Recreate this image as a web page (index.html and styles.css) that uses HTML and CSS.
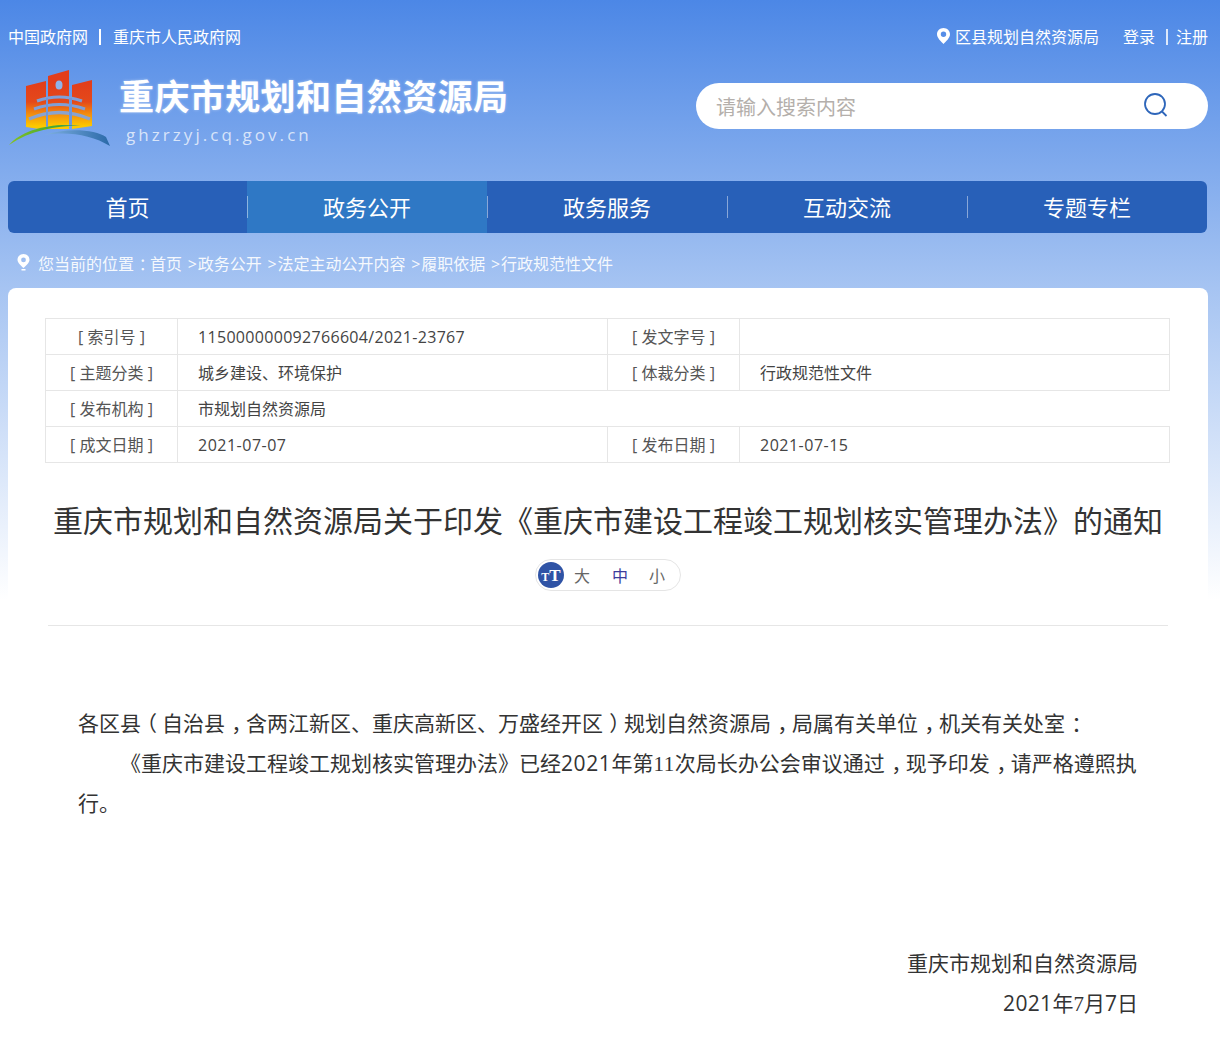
FILE: index.html
```html
<!DOCTYPE html>
<html lang="zh-CN">
<head>
<meta charset="utf-8">
<title>重庆市规划和自然资源局关于印发《重庆市建设工程竣工规划核实管理办法》的通知</title>
<link rel="stylesheet" href="styles.css">
</head>
<body>
<div class="page">
  <div class="topbar">
    <div class="toplinks">
      <a>中国政府网</a><i class="bar bar-left"></i><a>重庆市人民政府网</a>
    </div>
    <div class="toplinks">
      <svg class="pin" viewBox="0 0 13 16" width="13" height="16"><path fill="#fff" fill-rule="evenodd" d="M6.5 0C2.9 0 0 2.8 0 6.3 0 10 4.200 13.700 6.500 16 8.800 13.700 13 10 13 6.300 13 2.800 10.100 0 6.500 0ZM6.500 3.600A2.700 2.700 0 1 1 6.500 9 2.700 2.700 0 0 1 6.500 3.600Z"/></svg>
      <a class="district">区县规划自然资源局</a>
      <a class="login">登录</a><i class="bar bar-right"></i><a>注册</a>
    </div>
  </div>

  <div class="masthead">
    <div class="brand">
      <svg class="logo" viewBox="8 64 104 82" width="104" height="82">
        <defs>
          <linearGradient id="warm" gradientUnits="userSpaceOnUse" x1="0" y1="80" x2="0" y2="124">
            <stop offset="0" stop-color="#e23d1b"/>
            <stop offset=".45" stop-color="#e4491a"/>
            <stop offset=".75" stop-color="#f3920e"/>
            <stop offset="1" stop-color="#fdc800"/>
          </linearGradient>
          <linearGradient id="arcg" gradientUnits="userSpaceOnUse" x1="9" y1="0" x2="80" y2="0">
            <stop offset="0" stop-color="#86c21f"/>
            <stop offset=".7" stop-color="#3fa53a"/>
            <stop offset="1" stop-color="#4b9a8a"/>
          </linearGradient>
          <linearGradient id="arcb" gradientUnits="userSpaceOnUse" x1="45" y1="0" x2="110" y2="0">
            <stop offset="0" stop-color="#7fb0e0"/>
            <stop offset="1" stop-color="#2a69a8"/>
          </linearGradient>
        </defs>
        <path fill="url(#warm)" d="M26 84 46 79V128L26 125Z"/>
        <path fill="url(#warm)" d="M48 74 69 68V127H48Z"/>
        <path fill="url(#warm)" d="M72 83 92 78V124L72 127Z"/>
        <ellipse cx="59" cy="83" rx="3.500" ry="4.500" fill="#8fb3ea"/>
        <path fill="none" stroke="#7f9fd8" stroke-width="3" d="M37 99Q59 91 82 99"/>
        <path fill="none" stroke="#7f9fd8" stroke-width="3" d="M34 107Q59 98 85 107"/>
        <path fill="none" stroke="#8aa3cf" stroke-width="3.500" d="M29 117Q59 104 90 117"/>
        <path fill="#6d97de" d="M46 96h2v28h-2zM69 96h3v28h-3z"/>
        <path fill="url(#arcg)" d="M9 143C22 128 50 120 84 124 62 123 32 127 9 143Z"/>
        <path fill="url(#arcb)" d="M44 133C68 125 96 128 106 135L110 144C92 133 68 129 44 133Z"/>
      </svg>
      <div class="brand-text">
        <div class="brand-name">重庆市规划和自然资源局</div>
        <div class="brand-url">ghzrzyj.cq.gov.cn</div>
      </div>
    </div>
    <div class="search">
      <input class="search-input" type="text" placeholder="请输入搜索内容">
      <svg class="search-icon" viewBox="0 0 26 26" width="26" height="26"><circle cx="12" cy="12" r="10" fill="none" stroke="#2e66ba" stroke-width="1.800"/><path d="M19 19.500 23.500 24" fill="none" stroke="#2e66ba" stroke-width="1.800"/></svg>
    </div>
  </div>

  <nav class="nav">
    <a class="nav-item">首页</a>
    <a class="nav-item active">政务公开</a>
    <a class="nav-item">政务服务</a>
    <a class="nav-item">互动交流</a>
    <a class="nav-item">专题专栏</a>
  </nav>

  <div class="crumbs">
    <svg class="crumb-pin" viewBox="0 0 13 17" width="13" height="17"><path fill="#fff" fill-rule="evenodd" d="M6.500 0C3 0 .5 2.600.5 5.800.5 8.800 4.300 12 6.500 14 8.700 12 12.500 8.800 12.500 5.800 12.500 2.600 10 0 6.500 0ZM6.500 3.500A2.400 2.400 0 1 1 6.500 8.300 2.400 2.400 0 0 1 6.500 3.500ZM4.500 15h4v1.500h-4Z"/></svg>
    <span>您当前的位置<span class="pr">：</span>首页<span class="sep">&gt;</span>政务公开<span class="sep">&gt;</span>法定主动公开内容<span class="sep">&gt;</span>履职依据<span class="sep">&gt;</span>行政规范性文件</span>
  </div>

  <main class="card">
    <table class="meta">
      <colgroup><col class="c-label"><col class="c-value"><col class="c-label"><col></colgroup>
      <tr><th>[ 索引号 ]</th><td class="num">115000000092766604/2021-23767</td><th>[ 发文字号 ]</th><td></td></tr>
      <tr><th>[ 主题分类 ]</th><td>城乡建设、环境保护</td><th>[ 体裁分类 ]</th><td>行政规范性文件</td></tr>
      <tr><th>[ 发布机构 ]</th><td class="open-right">市规划自然资源局</td><td class="blank" colspan="2"></td></tr>
      <tr><th>[ 成文日期 ]</th><td class="date">2021-07-07</td><th>[ 发布日期 ]</th><td class="date">2021-07-15</td></tr>
    </table>

    <h1 class="title">重庆市规划和自然资源局关于印发《重庆市建设工程竣工规划核实管理办法》的通知</h1>

    <div class="size-row">
      <div class="sizes">
        <span class="size-icon"><span class="t-small">T</span><span class="t-big">T</span></span>
        <a class="s-big">大</a><a class="s-mid">中</a><a class="s-small">小</a>
      </div>
    </div>

    <hr class="rule">

    <article class="body">
      <p>各区县<span class="pl">（</span>自治县<span class="pr">，</span>含两江新区、重庆高新区、万盛经开区<span class="pr">）</span>规划自然资源局<span class="pr">，</span>局属有关单位<span class="pr">，</span>机关有关处室<span class="pr">：</span></p>
      <p class="indent">《重庆市建设工程竣工规划核实管理办法》已经<span class="wide">2021</span>年第<span class="thin wide">11</span>次局长办公会审议通过<span class="pr">，</span>现予印发<span class="pr">，</span>请严格遵照执<br>行。</p>
      <p class="sign first">重庆市规划和自然资源局</p>
      <p class="sign"><span class="wide">2021</span>年<span class="thin">7</span>月7日</p>
    </article>
  </main>
</div>
</body>
</html>
```
FILE: styles.css
```css
* { box-sizing: border-box; }
html, body { margin: 0; padding: 0; }
body {
  font-family: "Open Sans", "Noto Sans CJK SC", sans-serif;
  color: #333;
  background: #fff linear-gradient(#4c87e6 0, #a6c4f2 288px, #fff 600px) no-repeat;
  background-size: 100% 600px;
}
.page { width: 1200px; margin-left: 8px; }
a { color: inherit; text-decoration: none; }

/* full-width punctuation is drawn centred in its cell */
.pr, .pl { display: inline-block; width: 1em; line-height: 1; text-indent: 0; }
.pr { transform: translateX(.3em); }
.pl { transform: translateX(-.24em); }

.topbar {
  display: flex;
  justify-content: space-between;
  align-items: center;
  height: 49px;
  padding-top: 25px;
  color: #fff;
  font-size: 16px;
}
.toplinks { display: flex; align-items: center; line-height: 24px; }
.bar { display: block; width: 2px; height: 16px; background: #fff; }
.bar-left { margin: 0 12px 0 11px; }
.bar-right { margin: 0 8px 0 11px; opacity: .8; }
.pin { margin-right: 5px; margin-top: -3px; }
.login { margin-left: 24px; }

.masthead {
  display: flex;
  justify-content: space-between;
  height: 132px;
  padding-top: 17px;
}
.brand { display: flex; align-items: flex-start; }
.brand-text { margin-left: 7px; color: #fff; }
.brand-name {
  font-size: 35px;
  font-weight: 700;
  line-height: 48px;
  margin-top: 7px;
  letter-spacing: .4px;
  white-space: nowrap;
  text-shadow: 0 0 3px rgba(255, 255, 255, .45);
}
.brand-url {
  margin: 3px 0 0 7px;
  font-size: 17px;
  line-height: 22px;
  letter-spacing: 3.06px;
  color: rgba(255, 255, 255, .72);
}
.search {
  display: flex;
  align-items: center;
  width: 512px;
  height: 46px;
  margin-top: 17px;
  padding: 0 39px 0 20px;
  background: #fff;
  border-radius: 23px;
}
.search-input {
  flex: 1;
  min-width: 0;
  border: 0;
  outline: 0;
  padding: 0;
  background: transparent;
  font: 20px "Noto Sans CJK SC", sans-serif;
}
.search-input::placeholder { color: #b4afab; opacity: 1; }
.search-icon { margin-top: -2px; }

.nav {
  display: flex;
  height: 52px;
  width: 1199px;
  background: #2860b8;
  border-radius: 6px;
  overflow: hidden;
  color: #fff;
}
.nav-item {
  position: relative;
  flex: 0 0 240px;
  text-align: center;
  font-size: 22px;
  line-height: 52px;
}
.nav-item:first-child { flex-basis: 239px; }
.nav-item + .nav-item::before {
  content: "";
  position: absolute;
  left: 0;
  top: 15px;
  height: 22px;
  width: 1px;
  background: rgba(255, 255, 255, .45);
}
.nav-item.active { background: #2f78c5; }

.crumbs {
  display: flex;
  align-items: center;
  height: 55px;
  padding-left: 9px;
  padding-top: 4px;
  font-size: 16px;
  color: rgba(255, 255, 255, .92);
}
.crumb-pin { margin-right: 8px; flex: none; }
.sep { display: inline-block; width: 15.75px; text-align: right; padding-right: 1px; }

.card {
  background: #fff;
  border-radius: 8px 8px 0 0;
  padding: 30px 37px 18px;
}
.meta {
  width: 1125px;
  table-layout: fixed;
  border-collapse: collapse;
  font-size: 16px;
}
.c-label { width: 132px; }
.c-value { width: 430px; }
.meta th, .meta td {
  height: 36px;
  padding: 0 0 0 20px;
  border: 1px solid #e6e6e6;
  font-weight: 400;
  text-align: left;
  color: #444;
  line-height: 34px;
}
.meta th { padding: 0; text-align: center; color: #555; }
.meta .num { letter-spacing: .31px; }
.meta .date { letter-spacing: .5px; }
.meta .open-right { border-right: 0; }
.meta .blank { border-left: 0; border-right: 0; }

.title {
  margin: 37px 0 0;
  text-align: center;
  font-size: 30px;
  font-weight: 400;
  line-height: 42px;
  white-space: nowrap;
  color: #333;
}
.size-row { display: flex; justify-content: center; margin-top: 17px; }
.sizes {
  display: flex;
  align-items: center;
  width: 146px;
  height: 32px;
  padding-left: 2px;
  border: 1px solid #e5e5e5;
  border-radius: 16px;
  font-size: 16px;
  font-family: "Noto Sans CJK SC", sans-serif;
  color: #666;
}
.size-icon {
  display: flex;
  align-items: baseline;
  justify-content: center;
  width: 26px;
  height: 26px;
  border-radius: 50%;
  background: #2f53a5;
  color: #fff;
  font-family: "Liberation Serif", serif;
  font-weight: 700;
  line-height: 27px;
}
.t-small { font-size: 12px; }
.t-big { font-size: 17px; }
.s-big { margin-left: 10px; }
.s-mid { margin-left: 22px; color: #3c3c9c; }
.s-small { margin-left: 21px; }

.rule {
  width: 1120px;
  height: 1px;
  margin: 34px 0 0 3px;
  border: 0;
  background: #e6e6e6;
}
.body {
  width: 1060px;
  margin: 77px 0 0 33px;
  font-size: 21px;
  line-height: 40px;
  color: #333;
}
.body p { margin: 0; }
.body .indent { text-indent: 42px; }
.body .sign { text-align: right; }
.body .first { margin-top: 120px; }
.wide { letter-spacing: .6px; }
.sign .wide { letter-spacing: .35px; }
.thin { font-family: "Liberation Serif", serif; line-height: 1; }
```
